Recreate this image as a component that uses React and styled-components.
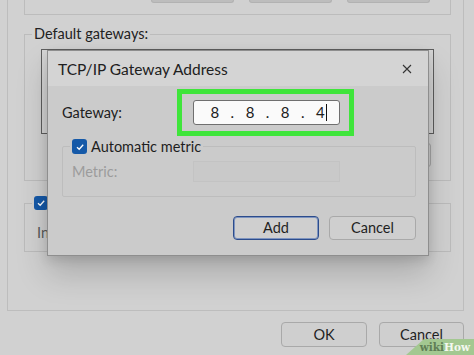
import React from 'react';
import styled, {createGlobalStyle} from 'styled-components';

const Global = createGlobalStyle`
  html, body { margin: 0; padding: 0; }
  body {
    background: #d1d1d1;
    font-family: Lato, "Noto Sans", sans-serif;
    color: #1e1e1e;
  }
`

const Screen = styled.div`
  position: relative;
  width: 474px;
  height: 355px;
  overflow: hidden;
  background: #d1d1d1;
`

const Panel = styled.div`
  margin: -20px 0 0 7px;
  width: 457px;
  height: 331px;
  border: 1px solid #bdbdbd;
  border-top: none;
  box-sizing: border-box;
  padding: 0 12px 0 16px;
  display: flex;
  flex-direction: column;
`

const TopGroup = styled.div`
  height: 34px;
  border: 1px solid #bcbcbc;
  border-top: none;
  display: flex;
  justify-content: flex-end;
  gap: 15px;
  padding-right: 20px;
`

const GhostButton = styled.div`
  width: 81px;
  height: 22px;
  background: #bdbdbd;
  border: 1px solid #b2b2b2;
  border-top: none;
  border-radius: 0 0 3px 3px;
`

const Group = styled.fieldset`
  margin: ${p => p.$top}px 0 0;
  padding: 0;
  height: ${p => p.$h}px;
  border: 1px solid #bcbcbc;
  box-sizing: border-box;
  position: relative;
  min-width: 0;
`

const Legend = styled.legend`
  font-size: 14.5px;
  padding: 0 2px;
  margin-left: 7px;
  color: #222;
  line-height: 16px;
`

const ListBox = styled.div`
  margin: 7px 16px 0 16px;
  height: 83px;
  border: 1px solid #5e5e5e;
  background: #d6d6d6;
`

const SideButton = styled.div`
  margin: 9px 19px 0 auto;
  width: 81px;
  height: 22px;
  border: 1px solid #a7a7a7;
  border-radius: 3px;
  background: #cdcdcd;
`

const CheckLegend = styled.legend`
  padding: 0 2px;
  margin-left: 7px;
  display: flex;
  align-items: center;
`

const Check = styled.span`
  display: inline-flex;
  align-items: center;
  justify-content: center;
  width: ${p => p.$size}px;
  height: ${p => p.$size}px;
  border-radius: 3px;
  background: #1559a8;
  svg { width: 10px; height: 10px; }
`

const FadedText = styled.div`
  margin: 14px 0 0 12px;
  font-size: 14.5px;
  color: #5a5a5a;
`

const Footer = styled.div`
  display: flex;
  justify-content: flex-end;
  gap: 12px;
  margin: 11px 10px 0 0;
`

const Button = styled.div`
  width: ${p => p.$w}px;
  height: ${p => p.$h}px;
  box-sizing: border-box;
  border: 1px solid ${p => p.$primary ? '#2c4c8c' : '#a9a9a9'};
  ${p => p.$primary && 'box-shadow: inset 0 0 0 1px #7e94bf;'}
  border-radius: 4px;
  background: #cfcfcf;
  display: flex;
  align-items: center;
  justify-content: center;
  font-size: 14.5px;
  line-height: 16px;
  color: #1f1f1f;
`

const Dialog = styled.div`
  position: absolute;
  left: 47px;
  top: 50px;
  width: 382px;
  height: 206px;
  box-sizing: border-box;
  border: 1px solid #8e8e8e;
  background: #cbcbcb;
  box-shadow: 0 18px 30px rgba(0,0,0,0.18), 0 4px 10px rgba(0,0,0,0.12);
  display: flex;
  flex-direction: column;
`

const TitleBar = styled.div`
  height: 35px;
  background: #d4d4d4;
  display: flex;
  align-items: center;
  justify-content: space-between;
  padding: 0 16px 0 10px;
  font-size: 15.5px;
  color: #202020;
`

const Body = styled.div`
  padding: 0 12px 0 14px;
  display: flex;
  flex-direction: column;
`

const Row = styled.div`
  display: flex;
  align-items: center;
  height: ${p => p.$h}px;
`

const Label = styled.div`
  width: ${p => p.$w}px;
  font-size: 14.5px;
  color: ${p => p.$disabled ? '#9c9c9c' : '#202020'};
`

const Highlight = styled.div`
  position: relative;
  margin-left: -16px;
  padding: 6px 9px 6px 11px;
  border: 5px solid #3fe53b;
`

const Input = styled.div`
  width: 147px;
  height: 25px;
  box-sizing: border-box;
  background: #fafafa;
  border: 1px solid #6f6f6f;
  border-radius: 3px;
  display: flex;
  align-items: center;
  padding-left: 12px;
  font-size: 15px;
  color: #202020;
  span { width: 17.6px; text-align: center; }
  i {
    display: inline-block;
    width: 1px;
    height: 17px;
    background: #111;
    margin-left: -3px;
  }
`

const MetricBox = styled.fieldset`
  margin: 0;
  padding: 0 0 0 9px;
  height: 59px;
  border: 1px solid #bdbdbd;
  border-radius: 2px;
  min-width: 0;
  box-sizing: border-box;
`

const MetricLegend = styled.legend`
  padding: 0 2px;
  margin-left: -2px;
  display: flex;
  align-items: center;
  gap: 4px;
  font-size: 14.5px;
  color: #1e1e1e;
`

const DisabledInput = styled.div`
  width: 147px;
  height: 21px;
  box-sizing: border-box;
  border: 1px solid #c3c3c3;
  background: #c9c9c9;
`

const ButtonRow = styled.div`
  display: flex;
  justify-content: flex-end;
  gap: 10px;
  margin-top: 19px;
`

const Watermark = styled.div`
  position: absolute;
  right: 0;
  bottom: 0;
  width: 68px;
  height: 16px;
  background: #a3c891;
  clip-path: polygon(18px 0, 100% 0, 100% 100%, 0 100%);
  display: flex;
  align-items: center;
  justify-content: flex-end;
  padding-right: 4px;
  box-sizing: border-box;
  font-family: "DejaVu Serif", serif;
  font-weight: bold;
  font-size: 10.5px;
  line-height: 12px;
  color: #f4f8f0;
  b { color: #5f7e55; font-weight: bold; }
`

const Tick = () => (
  <svg viewBox="0 0 10 10"><path d="M2 5.2 L4.2 7.3 L8.2 2.8" fill="none" stroke="#fff" strokeWidth="1.3" /></svg>
)

export default function App() {
  return (
    <Screen>
      <Global />
      <Panel>
        <TopGroup>
          <GhostButton />
          <GhostButton />
          <GhostButton />
        </TopGroup>
        <Group $top={11} $h={155}>
          <Legend>Default gateways:</Legend>
          <ListBox />
          <SideButton />
        </Group>
        <Group $top={15} $h={56}>
          <CheckLegend><Check $size={14}><Tick /></Check></CheckLegend>
          <FadedText>In</FadedText>
        </Group>
      </Panel>
      <Footer>
        <Button $w={86} $h={25}>OK</Button>
        <Button $w={85} $h={25}>Cancel</Button>
      </Footer>

      <Dialog>
        <TitleBar>
          <span>TCP/IP Gateway Address</span>
          <svg width="10" height="10" viewBox="0 0 10 10"><path d="M1 1 L9 9 M9 1 L1 9" stroke="#333" strokeWidth="1.1" /></svg>
        </TitleBar>
        <Body>
          <Row $h={52}>
            <Label $w={131}>Gateway:</Label>
            <Highlight>
              <Input>
                <span>8</span><span>.</span><span>8</span><span>.</span><span>8</span><span>.</span><span>4</span><i />
              </Input>
            </Highlight>
          </Row>
          <MetricBox>
            <MetricLegend><Check $size={15}><Tick /></Check>Automatic metric</MetricLegend>
            <Row $h={32}>
              <Label $disabled $w={121}>Metric:</Label>
              <DisabledInput />
            </Row>
          </MetricBox>
          <ButtonRow>
            <Button $primary $w={86} $h={24}>Add</Button>
            <Button $w={87} $h={24}>Cancel</Button>
          </ButtonRow>
        </Body>
      </Dialog>
      <Watermark><b>wiki</b>How</Watermark>
    </Screen>
  );
}
